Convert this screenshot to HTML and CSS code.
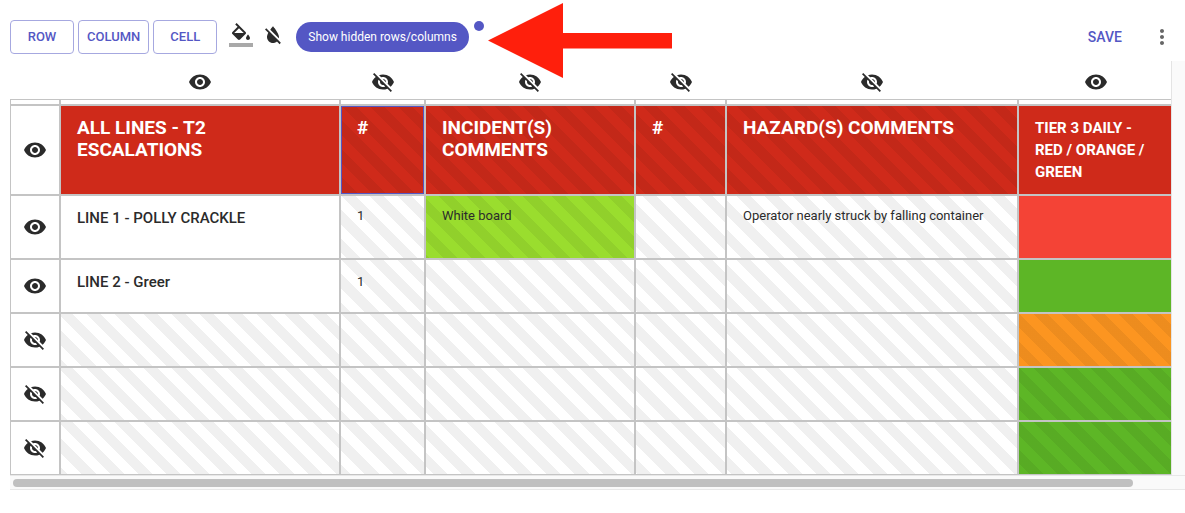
FILE: index.html
```
<!DOCTYPE html>
<html lang="en">
<head>
<meta charset="utf-8">
<title>Table editor</title>
<link rel="stylesheet" href="styles.css">
</head>
<body>
<svg class="sprite" aria-hidden="true">
  <symbol id="eye" viewBox="0 0 24 24"><path d="M12 4.5C7 4.5 2.73 7.61 1 12c1.73 4.39 6 7.5 11 7.5s9.27-3.11 11-7.5c-1.73-4.39-6-7.5-11-7.5zM12 17c-2.76 0-5-2.24-5-5s2.24-5 5-5 5 2.24 5 5-2.24 5-5 5zm0-8c-1.66 0-3 1.34-3 3s1.34 3 3 3 3-1.34 3-3-1.34-3-3-3z"/></symbol>
  <symbol id="eye-off" viewBox="0 0 24 24"><path d="M12 7c2.76 0 5 2.24 5 5 0 .65-.13 1.26-.36 1.83l2.92 2.92c1.51-1.26 2.7-2.89 3.43-4.75-1.73-4.39-6-7.5-11-7.5-1.4 0-2.74.25-3.98.7l2.16 2.16C10.74 7.13 11.35 7 12 7zM2 4.27l2.28 2.28.46.46C3.08 8.3 1.78 10.02 1 12c1.73 4.39 6 7.5 11 7.5 1.55 0 3.03-.3 4.38-.84l.42.42L19.73 22 21 20.73 3.27 3 2 4.27zM7.53 9.8l1.55 1.55c-.05.21-.08.43-.08.65 0 1.66 1.34 3 3 3 .22 0 .44-.03.65-.08l1.55 1.55c-.67.33-1.41.53-2.2.53-2.76 0-5-2.24-5-5 0-.79.2-1.53.53-2.2zm4.31-.78l3.15 3.15.02-.16c0-1.66-1.34-3-3-3l-.17.01z"/></symbol>
</svg>

<header class="toolbar">
  <div class="button-group">
    <button class="button" type="button">ROW</button>
    <button class="button" type="button">COLUMN</button>
    <button class="button" type="button">CELL</button>
  </div>
  <div class="color-tools">
    <button class="icon-button" type="button" aria-label="Fill color">
      <svg class="icon" viewBox="0 0 24 24"><path d="M16.56 8.94L7.62 0 6.21 1.41l2.38 2.38-5.15 5.15c-.59.59-.59 1.54 0 2.12l5.5 5.5c.29.29.68.44 1.06.44s.77-.15 1.06-.44l5.5-5.5c.59-.58.59-1.53 0-2.12zM5.21 10L10 5.21 14.79 10H5.21zM19 11.5s-2 2.17-2 3.5c0 1.1.9 2 2 2s2-.9 2-2c0-1.33-2-3.5-2-3.5z"/><path fill="#a9a9a9" d="M0 20h24v4H0z"/></svg>
    </button>
    <button class="icon-button" type="button" aria-label="Reset color">
      <svg class="icon" viewBox="0 0 24 24"><path d="M18 14c0-4-6-10.8-6-10.8s-1.33 1.51-2.73 3.52l8.59 8.59c.09-.42.14-.86.14-1.31zm-.88 3.12L12.5 12.5 5.27 5.27 4 6.55l3.32 3.32C6.55 11.32 6 12.79 6 14c0 3.31 2.69 6 6 6 1.52 0 2.9-.57 3.96-1.5l2.63 2.63 1.27-1.27-2.74-2.74z"/></svg>
    </button>
  </div>
  <div class="pill-holder">
    <button class="pill" type="button">Show hidden rows/columns</button>
    <span class="dot"></span>
    <svg class="arrow" viewBox="0 0 184 75" aria-hidden="true"><path d="M0 37.500L75 0V30H184V45.500H75V75z"/></svg>
  </div>
  <div class="actions">
    <button class="save" type="button">SAVE</button>
    <button class="icon-button more" type="button" aria-label="More options">
      <svg class="icon" viewBox="0 0 24 24"><path d="M12 8c1.100 0 2-.9 2-2s-.9-2-2-2-2 .9-2 2 .9 2 2 2zm0 2c-1.100 0-2 .9-2 2s.9 2 2 2 2-.9 2-2-.9-2-2-2zm0 6c-1.100 0-2 .9-2 2s.9 2 2 2 2-.9 2-2-.9-2-2-2z"/></svg>
    </button>
  </div>
</header>

<main class="scroller">
  <div class="viewport">
    <div class="canvas">
      <table class="sheet">
        <colgroup>
          <col class="col-toggle"><col class="col-line"><col class="col-count"><col class="col-incident"><col class="col-count2"><col class="col-hazard"><col>
        </colgroup>
        <thead>
          <tr class="toggles">
            <td></td>
            <th><button class="icon-button" type="button" aria-label="Hide column 1"><svg class="icon"><use href="#eye"/></svg></button></th>
            <th><button class="icon-button" type="button" aria-label="Show column 2"><svg class="icon"><use href="#eye-off"/></svg></button></th>
            <th><button class="icon-button" type="button" aria-label="Show column 3"><svg class="icon"><use href="#eye-off"/></svg></button></th>
            <th><button class="icon-button" type="button" aria-label="Show column 4"><svg class="icon"><use href="#eye-off"/></svg></button></th>
            <th><button class="icon-button" type="button" aria-label="Show column 5"><svg class="icon"><use href="#eye-off"/></svg></button></th>
            <th><button class="icon-button" type="button" aria-label="Hide column 6"><svg class="icon"><use href="#eye"/></svg></button></th>
          </tr>
          <tr class="handles"><td></td><td></td><td></td><td></td><td></td><td></td><td></td></tr>
        </thead>
        <tbody>
          <tr class="titles">
            <td class="toggle"><button class="icon-button" type="button" aria-label="Hide row 1"><svg class="icon"><use href="#eye"/></svg></button></td>
            <th>ALL LINES - T2 ESCALATIONS</th>
            <th class="hidden selected">#</th>
            <th class="hidden">INCIDENT(S) COMMENTS</th>
            <th class="hidden">#</th>
            <th class="hidden">HAZARD(S) COMMENTS</th>
            <th class="tier">TIER 3 DAILY - RED / ORANGE / GREEN</th>
          </tr>
          <tr class="tall">
            <td class="toggle"><button class="icon-button" type="button" aria-label="Hide row 2"><svg class="icon"><use href="#eye"/></svg></button></td>
            <td class="line">LINE 1 - POLLY CRACKLE</td>
            <td class="hidden">1</td>
            <td class="hidden lime">White board</td>
            <td class="hidden"></td>
            <td class="hidden">Operator nearly struck by falling container</td>
            <td class="red"></td>
          </tr>
          <tr>
            <td class="toggle"><button class="icon-button" type="button" aria-label="Hide row 3"><svg class="icon"><use href="#eye"/></svg></button></td>
            <td class="line">LINE 2 - Greer</td>
            <td class="hidden loose">1</td>
            <td class="hidden"></td><td class="hidden"></td><td class="hidden"></td>
            <td class="green"></td>
          </tr>
          <tr>
            <td class="toggle"><button class="icon-button" type="button" aria-label="Show row 4"><svg class="icon"><use href="#eye-off"/></svg></button></td>
            <td class="hidden"></td><td class="hidden"></td><td class="hidden"></td><td class="hidden"></td><td class="hidden"></td>
            <td class="hidden orange"></td>
          </tr>
          <tr>
            <td class="toggle"><button class="icon-button" type="button" aria-label="Show row 5"><svg class="icon"><use href="#eye-off"/></svg></button></td>
            <td class="hidden"></td><td class="hidden"></td><td class="hidden"></td><td class="hidden"></td><td class="hidden"></td>
            <td class="hidden green"></td>
          </tr>
          <tr>
            <td class="toggle"><button class="icon-button" type="button" aria-label="Show row 6"><svg class="icon"><use href="#eye-off"/></svg></button></td>
            <td class="hidden"></td><td class="hidden"></td><td class="hidden"></td><td class="hidden"></td><td class="hidden"></td>
            <td class="hidden green"></td>
          </tr>
        </tbody>
      </table>
    </div>
    <div class="track-y"></div>
  </div>
  <div class="track-x"><div class="thumb"></div></div>
</main>
</body>
</html>
```
FILE: styles.css
```
* {
  box-sizing: border-box;
}

body {
  margin: 0;
  background: #fff;
  color: #2b2b2b;
  font-family: Roboto, "Liberation Sans", sans-serif;
  font-size: 13px;
}

button {
  margin: 0;
  padding: 0;
  border: 0;
  background: none;
  color: inherit;
  font: inherit;
  cursor: pointer;
}

.sprite {
  position: absolute;
  width: 0;
  height: 0;
}

.icon {
  display: block;
  width: 24px;
  height: 24px;
  fill: currentColor;
}

.icon-button {
  display: inline-block;
  vertical-align: top;
}

/* Toolbar */
.toolbar {
  display: flex;
  align-items: center;
  padding: 20px 11px 7px 10px;
}

.button-group {
  display: flex;
  gap: 4px;
}

.button {
  min-width: 64px;
  height: 34px;
  padding: 0 8px 2px;
  border: 1px solid #a6a8e0;
  border-radius: 4px;
  color: #5457c4;
  font-weight: 500;
}

.color-tools {
  display: flex;
  gap: 8px;
  margin: 0 11px 4px 12px;
}

.pill-holder {
  position: relative;
}

.pill {
  height: 30px;
  padding: 0 12px;
  border-radius: 15px;
  background: #5457c4;
  color: #fff;
  font-size: 12px;
}

.dot {
  position: absolute;
  top: -1px;
  left: calc(100% + 5px);
  width: 10px;
  height: 10px;
  border-radius: 50%;
  background: #5457c4;
}

.arrow {
  position: absolute;
  top: -19px;
  left: calc(100% + 19px);
  width: 184px;
  height: 75px;
  fill: #ff1f0c;
}

.actions {
  display: flex;
  align-items: center;
  gap: 28px;
  margin-left: auto;
}

.save {
  color: #5457c4;
  font-size: 14px;
  font-weight: 500;
}

.more {
  color: #666;
}

/* Sheet */
.scroller {
  padding-left: 10px;
}

.viewport {
  display: flex;
}

.canvas {
  flex: 1;
  min-width: 0;
  overflow: hidden;
}

.sheet {
  width: calc(100% + 3px);
  table-layout: fixed;
  border-collapse: separate;
  border-spacing: 0;
}

.col-toggle { width: 50px; }
.col-line { width: 280px; }
.col-count { width: 85px; }
.col-incident { width: 210px; }
.col-count2 { width: 91px; }
.col-hazard { width: 292px; }

.sheet td,
.sheet th {
  height: 54px;
  padding: 11px 16px;
  border: 1px solid #c4c4c4;
  line-height: 18px;
  text-align: left;
  vertical-align: top;
}

.sheet .toggles td,
.sheet .toggles th {
  height: 38px;
  padding: 9px 0 5px;
  border: 0;
  text-align: center;
}

.sheet .handles td {
  height: 6px;
  padding: 0;
}

.sheet .toggle {
  padding: 0;
  text-align: center;
  vertical-align: middle;
}

.sheet .titles th {
  height: 90px;
  background-color: #cf2a1a;
  color: #fff;
  font-size: 19px;
  font-weight: 700;
  line-height: 22px;
}

.sheet .titles .tier {
  font-size: 15px;
}

.sheet .titles .selected {
  box-shadow: inset 0 0 0 1px #5457c4;
}

.sheet .tall td {
  height: 64px;
}

.sheet .line {
  font-size: 15px;
  font-weight: 500;
  line-height: 22px;
}

.sheet .loose {
  line-height: 22px;
}

.sheet .hidden {
  background-image: repeating-linear-gradient(225deg, transparent 0 10px, rgba(0, 0, 0, 0.06) 10px 20px);
  background-origin: border-box;
}

.lime { background-color: #9add2e; }
.red { background-color: #f44336; }
.green { background-color: #5db626; }
.orange { background-color: #fc9520; }

/* Scrollbars */
.track-y {
  width: 14px;
  border-left: 1px solid #e4e4e4;
  background: #fafafa;
}

.track-x {
  padding: 3px 52px 2px 3px;
  border-top: 1px solid #e8e8e8;
  border-bottom: 1px solid #e8e8e8;
  background: #fafafa;
}

.thumb {
  height: 8px;
  border-radius: 4px;
  background: #c0c0c0;
}
```
